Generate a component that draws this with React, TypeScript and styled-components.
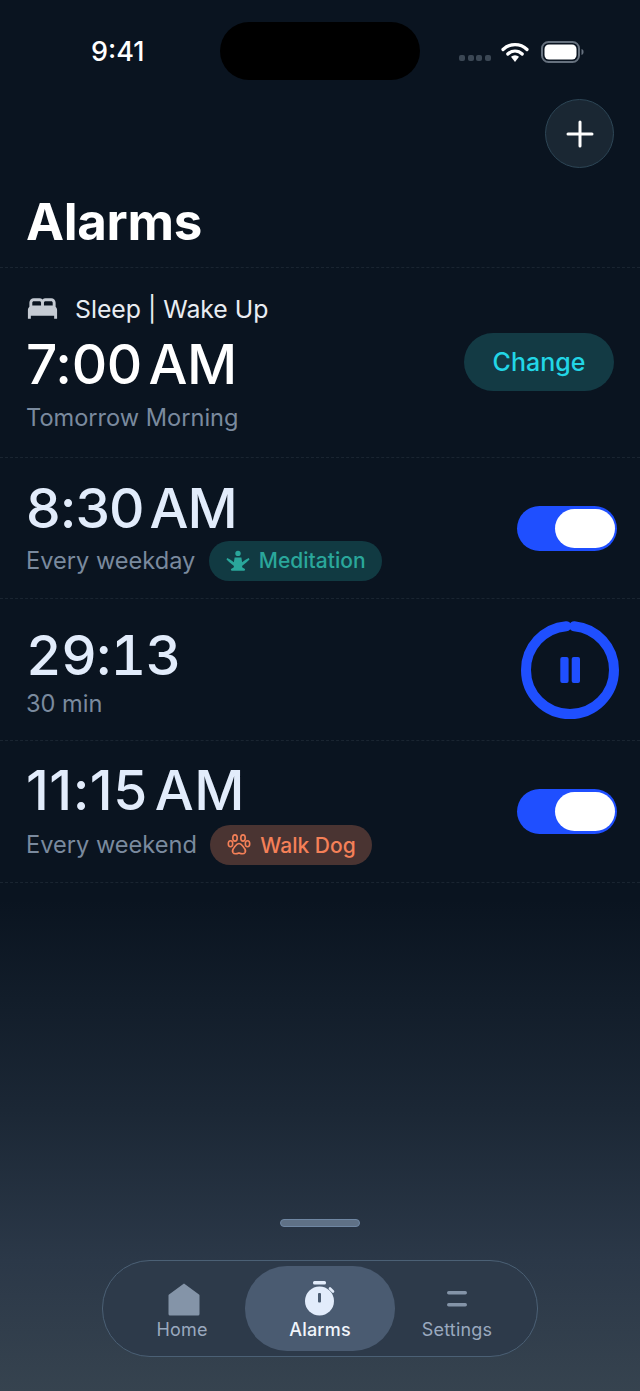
import styled, { createGlobalStyle } from "styled-components";
import { MdBed } from "react-icons/md";

const GlobalStyle = createGlobalStyle`
  html, body {
    margin: 0;
    padding: 0;
    background: #0a1420;
  }
  * {
    box-sizing: border-box;
  }
`;

const Screen = styled.div`
  width: 640px;
  height: 1391px;
  overflow: hidden;
  display: flex;
  flex-direction: column;
  font-family: Inter, "Liberation Sans", sans-serif;
  color: #fff;
  background: linear-gradient(
    to bottom,
    #0a1420 0,
    #0a1420 900px,
    #1b2735 1110px,
    #2b3848 1260px,
    #36434f 1391px
  );
`;

const StatusBar = styled.div`
  height: 99px;
  padding-top: 22px;
  display: grid;
  grid-template-columns: 220px 200px 220px;
  align-items: start;
`;

const Clock = styled.div`
  font-size: 27px;
  font-weight: 500;
  line-height: 60px;
  padding-left: 91px;
`;

const Island = styled.div`
  height: 58px;
  background: #000;
  border-radius: 29px;
`;

const StatusIcons = styled.div`
  height: 60px;
  display: flex;
  align-items: center;
  padding-left: 39px;
`;

const SignalDots = styled.div`
  display: flex;
  gap: 2.6px;
  margin-top: 12px;
  margin-right: 10px;
`;

const SignalDot = styled.span`
  width: 6px;
  height: 6px;
  border-radius: 2px;
  background: #3b4754;
`;

const HeaderAction = styled.div`
  display: flex;
  justify-content: flex-end;
  padding-right: 26px;
`;

const AddButton = styled.button`
  width: 69px;
  height: 69px;
  padding: 0;
  border-radius: 50%;
  border: 1px solid #2d4656;
  background: #1a2733;
  display: flex;
  align-items: center;
  justify-content: center;
`;

const Title = styled.h1`
  margin: 24px 0 0;
  padding: 0 0 16px 26px;
  font-size: 51px;
  line-height: 59px;
  font-weight: 700;
  letter-spacing: -0.3px;
  border-bottom: 1px dashed #1a2531;
`;

const Row = styled.div<{ $height: number; $top?: number }>`
  height: ${(p) => p.$height}px;
  padding: ${(p) => p.$top ?? 0}px 23px 0 26px;
  display: flex;
  align-items: center;
  justify-content: space-between;
  border-bottom: 1px dashed #1a2531;
`;

const RowMain = styled.div`
  display: flex;
  flex-direction: column;
`;

const SleepLabel = styled.div`
  display: flex;
  align-items: center;
  gap: 15px;
  margin-bottom: 6px;
  font-size: 24.8px;
  line-height: 30px;
  color: #e9edf2;
  svg {
    margin-left: -1px;
    color: #c5cbd3;
  }
`;

const Time = styled.div<{ $bright?: boolean; $track?: number; $tabular?: boolean }>`
  font-size: 55px;
  line-height: 64px;
  font-weight: 500;
  letter-spacing: ${(p) => p.$track ?? 0}px;
  word-spacing: -8px;
  font-variant-numeric: ${(p) => (p.$tabular ? "tabular-nums" : "normal")};
  color: ${(p) => (p.$bright ? "#ffffff" : "#e2ecfb")};
`;

const SubRow = styled.div<{ $gap?: number }>`
  display: flex;
  align-items: center;
  gap: 13.5px;
  margin-top: ${(p) => p.$gap ?? 1}px;
`;

const SubText = styled.div<{ $gap?: number }>`
  margin-top: ${(p) => p.$gap ?? 0}px;
  font-size: 23.6px;
  line-height: 32px;
  color: #7a8a9e;
`;

const ChangeButton = styled.button`
  width: 150px;
  height: 58px;
  margin: 0 3px 2px 0;
  border: 0;
  border-radius: 29px;
  background: #133a44;
  color: #22d6e6;
  font-family: inherit;
  font-size: 25px;
  font-weight: 500;
`;

const Chip = styled.div<{ $bg: string; $fg: string }>`
  height: 40px;
  padding: 0 16px 0 17px;
  display: flex;
  align-items: center;
  gap: 9px;
  border-radius: 20px;
  font-size: 21px;
  font-weight: 500;
  background: ${(p) => p.$bg};
  color: ${(p) => p.$fg};
`;

const Toggle = styled.div`
  width: 100px;
  height: 45px;
  padding: 3px 2px;
  display: flex;
  justify-content: flex-end;
  border-radius: 23px;
  background: #1f4fff;
`;

const Knob = styled.div`
  width: 60px;
  height: 39px;
  border-radius: 20px;
  background: #fff;
`;

const TimerRing = styled.svg`
  display: block;
  margin: -3px -2px 0 0;
`;

const Dock = styled.div`
  margin-top: auto;
  padding-bottom: 34px;
  display: flex;
  flex-direction: column;
  align-items: center;
  gap: 33px;
`;

const Handle = styled.div`
  width: 80px;
  height: 8px;
  border-radius: 4px;
  background: #5f7186;
  border: 1px solid #6f87a3;
`;

const TabBar = styled.nav`
  width: 436px;
  height: 97px;
  padding: 5px 0 0 16px;
  display: grid;
  grid-template-columns: 126px 150px 124px;
  border-radius: 48px;
  border: 1px solid #4b6075;
  background: #2d3a4a;
`;

const Tab = styled.div<{ $active?: boolean }>`
  height: 85px;
  display: flex;
  flex-direction: column;
  align-items: center;
  justify-content: flex-end;
  padding-bottom: 10px;
  border-radius: 42px;
  font-size: 18px;
  line-height: 22px;
  font-weight: ${(p) => (p.$active ? 500 : 400)};
  letter-spacing: 0.2px;
  color: ${(p) => (p.$active ? "#f1f5fb" : "#9aa9bf")};
  background: ${(p) => (p.$active ? "#4a5b71" : "transparent")};
`;

const TabIcon = styled.svg<{ $shift?: number }>`
  display: block;
  margin: 0 0 3px ${(p) => p.$shift ?? 0}px;
`;

function WifiIcon() {
  return (
    <svg width="28" height="22" viewBox="0 0 28 22" style={{ marginRight: 12 }}>
      <path d="M2 8.5a17 17 0 0 1 24 0" fill="none" stroke="#fff" strokeWidth="3.2" strokeLinecap="round" />
      <path d="M6.8 13a10.2 10.2 0 0 1 14.4 0" fill="none" stroke="#fff" strokeWidth="3.2" strokeLinecap="round" />
      <path d="M10 15.8a6 6 0 0 1 8 0L14 21z" fill="#fff" />
    </svg>
  );
}

function BatteryIcon() {
  return (
    <svg width="44" height="22" viewBox="0 0 44 22">
      <rect x="1" y="1" width="37" height="20" rx="6.5" fill="none" stroke="#66717e" strokeWidth="2" />
      <rect x="3.5" y="3.5" width="32" height="15" rx="4.5" fill="#fff" />
      <path d="M40.5 8c1.6.4 2 1.6 2 3s-.4 2.6-2 3z" fill="#66717e" />
    </svg>
  );
}

function PlusIcon() {
  return (
    <svg width="28" height="28" viewBox="0 0 28 28">
      <path d="M14 2v24M2 14h24" stroke="#fff" strokeWidth="3" strokeLinecap="round" />
    </svg>
  );
}

function MeditationIcon() {
  return (
    <svg width="24" height="24" viewBox="0 0 24 24" fill="currentColor">
      <circle cx="12" cy="4.4" r="2.7" />
      <path d="M8.6 8.4h6.8l.7 4.8 3.4-2.5 3.3-1.6.7 1.4-2.6 2.4-4.9 4 .4 1.6 2.2 1.2c.9.6.6 2.1-.7 2.1H6.1c-1.3 0-1.6-1.5-.7-2.1l2.2-1.2.4-1.6-4.9-4-2.6-2.4.7-1.4 3.3 1.600 3.400 2.500z" />
    </svg>
  );
}

function PawIcon() {
  return (
    <svg width="24" height="24" viewBox="0 0 24 24" fill="none" stroke="currentColor" strokeWidth="1.6">
      <ellipse cx="8" cy="5" rx="2.2" ry="3.1" />
      <ellipse cx="16" cy="5" rx="2.2" ry="3.1" />
      <ellipse cx="3.5" cy="10.8" rx="2.2" ry="3" />
      <ellipse cx="20.5" cy="10.8" rx="2.2" ry="3" />
      <path d="M12 10.5c-2.5 0-3.5 2.3-5 4.2-1.500 1.700-2 3.300-1 4.900 1 1.500 3 1.500 6 .3 3 1.200 5 1.200 6-.3 1-1.600.5-3.200-1-4.900-1.500-1.900-2.500-4.200-5-4.200z" />
    </svg>
  );
}

function HomeIcon() {
  return (
    <TabIcon $shift={3} width="32" height="33" viewBox="0 0 32 33">
      <path d="M16 0.5 31 11.5a1 1 0 0 1 .5 1V31a1.5 1.5 0 0 1-1.5 1.5H2A1.5 1.5 0 0 1 .5 31V12.5a1 1 0 0 1 .5-1z" fill="#8494a8" />
    </TabIcon>
  );
}

function StopwatchIcon() {
  return (
    <TabIcon width="32" height="35" viewBox="0 0 32 35">
      <rect x="9" y="0" width="13" height="3.4" rx="1.5" fill="#e2ecfb" />
      <circle cx="15.5" cy="20" r="14.5" fill="#e2ecfb" />
      <path d="M26 7.5l3 3" stroke="#e2ecfb" strokeWidth="2.6" strokeLinecap="round" />
      <rect x="14" y="12" width="3" height="9.5" rx="1" fill="#4a5b71" />
    </TabIcon>
  );
}

function SettingsIcon() {
  return (
    <TabIcon width="20" height="33" viewBox="0 0 20 33">
      <rect x="0" y="8" width="20" height="3.4" rx="1.7" fill="#8494a8" />
      <rect x="0" y="20" width="20" height="3.4" rx="1.7" fill="#8494a8" />
    </TabIcon>
  );
}

export default function App() {
  return (
    <>
      <GlobalStyle />
      <Screen>
        <StatusBar>
          <Clock>9:41</Clock>
          <Island />
          <StatusIcons>
            <SignalDots>
              <SignalDot />
              <SignalDot />
              <SignalDot />
              <SignalDot />
            </SignalDots>
            <WifiIcon />
            <BatteryIcon />
          </StatusIcons>
        </StatusBar>
        <HeaderAction>
          <AddButton aria-label="Add alarm">
            <PlusIcon />
          </AddButton>
        </HeaderAction>
        <Title>Alarms</Title>
        <Row $height={190}>
          <RowMain>
            <SleepLabel>
              <MdBed size={35} />
              Sleep | Wake Up
            </SleepLabel>
            <Time $bright $track={-0.3}>7:00 AM</Time>
            <SubText $gap={6}>Tomorrow Morning</SubText>
          </RowMain>
          <ChangeButton>Change</ChangeButton>
        </Row>
        <Row $height={141}>
          <RowMain>
            <Time $track={-0.9}>8:30 AM</Time>
            <SubRow>
              <SubText>Every weekday</SubText>
              <Chip $bg="#113a42" $fg="#2aa79b">
                <MeditationIcon />
                Meditation
              </Chip>
            </SubRow>
          </RowMain>
          <Toggle>
            <Knob />
          </Toggle>
        </Row>
        <Row $height={142} $top={3}>
          <RowMain>
            <Time $tabular $track={-0.5}>29:13</Time>
            <SubText $gap={1}>30 min</SubText>
          </RowMain>
          <TimerRing width="98" height="98" viewBox="0 0 98 98">
            <circle
              cx="49"
              cy="49"
              r="44"
              fill="none"
              stroke="#1f4fff"
              strokeWidth="10"
              strokeLinecap="round"
              strokeDasharray="267.9 8.6"
              strokeDashoffset="-4.3"
              transform="rotate(-90 49 49)"
            />
            <rect x="39.3" y="36" width="8.3" height="26" rx="2" fill="#1f4fff" />
            <rect x="50.7" y="36" width="8.3" height="26" rx="2" fill="#1f4fff" />
          </TimerRing>
        </Row>
        <Row $height={142}>
          <RowMain>
            <Time $track={0.5}>11:15 AM</Time>
            <SubRow $gap={3}>
              <SubText>Every weekend</SubText>
              <Chip $bg="#4a3432" $fg="#f58058">
                <PawIcon />
                Walk Dog
              </Chip>
            </SubRow>
          </RowMain>
          <Toggle>
            <Knob />
          </Toggle>
        </Row>
        <Dock>
          <Handle />
          <TabBar>
            <Tab>
              <HomeIcon />
              Home
            </Tab>
            <Tab $active>
              <StopwatchIcon />
              Alarms
            </Tab>
            <Tab>
              <SettingsIcon />
              Settings
            </Tab>
          </TabBar>
        </Dock>
      </Screen>
    </>
  );
}
